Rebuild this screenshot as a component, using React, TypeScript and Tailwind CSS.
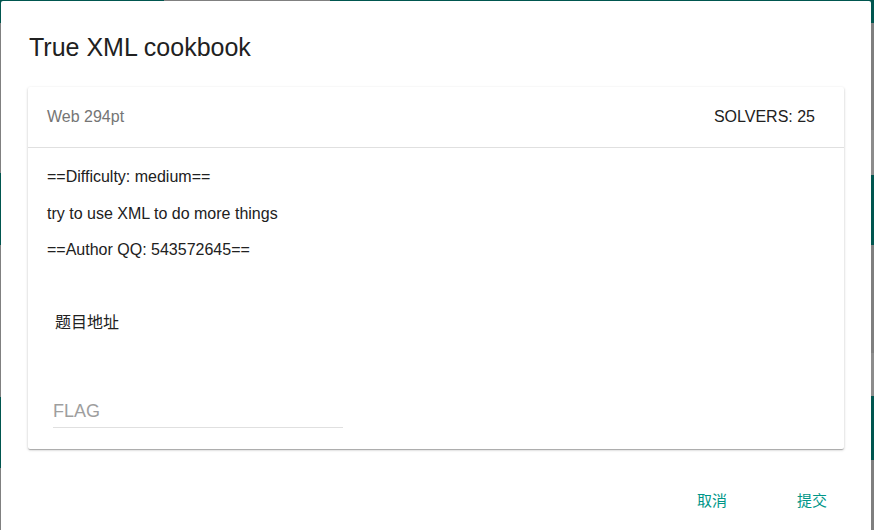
import React from "react";

export default function App() {
  return (
    <div className="relative h-[530px] w-[874px] overflow-hidden bg-[#808080] font-['Liberation_Sans','Noto_Sans_CJK_SC',sans-serif]">
      {/* background page (dimmed) */}
      <div className="flex h-full flex-col">
        <div className="flex h-[23px]">
          <div className="w-[164px] bg-[#00564f]" />
          <div className="w-[166px] bg-[#808080]" />
          <div className="flex-1 bg-[#00564f]" />
        </div>
        <div className="flex flex-1 justify-between">
          <div className="flex w-[1px] flex-col">
            <div className="h-[150px] bg-[#808080]" />
            <div className="h-[72px] bg-[#00564f]" />
            <div className="h-[152px] bg-[#808080]" />
            <div className="h-[71px] bg-[#00564f]" />
            <div className="flex-1 bg-[#808080]" />
          </div>
          <div className="flex w-[3px] flex-col">
            <div className="h-[107px] bg-[#7f7f7f]" />
            <div className="h-[45px] bg-[#8c8c8c]" />
            <div className="h-[70px] bg-[#00564f]" />
            <div className="h-[108px] bg-[#7f7f7f]" />
            <div className="h-[43px] bg-[#8c8c8c]" />
            <div className="h-[64px] bg-[#00564f]" />
            <div className="flex-1 bg-[#7f7f7f]" />
          </div>
        </div>
      </div>

      {/* dialog */}
      <div className="absolute left-[1px] top-[1px] flex h-[560px] w-[870px] flex-col rounded-[2px] bg-white text-[#212121]">
        <h2 className="px-[28px] pt-[30px] text-[25px] leading-[32px] font-normal text-[#212121]">
          True XML cookbook
        </h2>

        <div className="mx-[27px] mt-[24px] rounded-[2px] bg-white shadow-[0_1px_3px_rgba(0,0,0,0.2),0_1px_1px_rgba(0,0,0,0.14),0_2px_1px_-1px_rgba(0,0,0,0.12)]">
          <div className="flex h-[61px] items-center justify-between border-b border-[#e0e0e0] pl-[19px] pr-[29px] text-[16px]">
            <span className="text-[#757575]">Web 294pt</span>
            <span className="text-[#212121]">SOLVERS: 25</span>
          </div>
          <div className="flex flex-col px-[19px] pb-[21px] pt-[18px]">
            <div className="flex flex-col gap-[14.5px] text-[16px] leading-[22px]">
              <p>==Difficulty: medium==</p>
              <p>try to use XML to do more things</p>
              <p>==Author QQ: 543572645==</p>
            </div>
            <div className="mt-[44px] flex h-[36px] items-center pl-[8px] text-[16px]">
              <span>题目地址</span>
            </div>
            <div className="ml-[6px] mt-[55px] flex h-[32px] w-[290px] items-center border-b border-[#e0e0e0]">
              <input
                placeholder="FLAG"
                className="w-full bg-transparent text-[18px] text-[#212121] outline-none placeholder:text-[#9e9e9e]"
              />
            </div>
          </div>
        </div>

        <div className="mt-[34px] flex justify-end gap-[12px] pr-[15px]">
          <button className="flex h-[36px] w-[88px] items-center justify-center text-[15px] text-[#009688]">
            取消
          </button>
          <button className="flex h-[36px] w-[88px] items-center justify-center text-[15px] text-[#009688]">
            提交
          </button>
        </div>
      </div>
    </div>
  );
}
